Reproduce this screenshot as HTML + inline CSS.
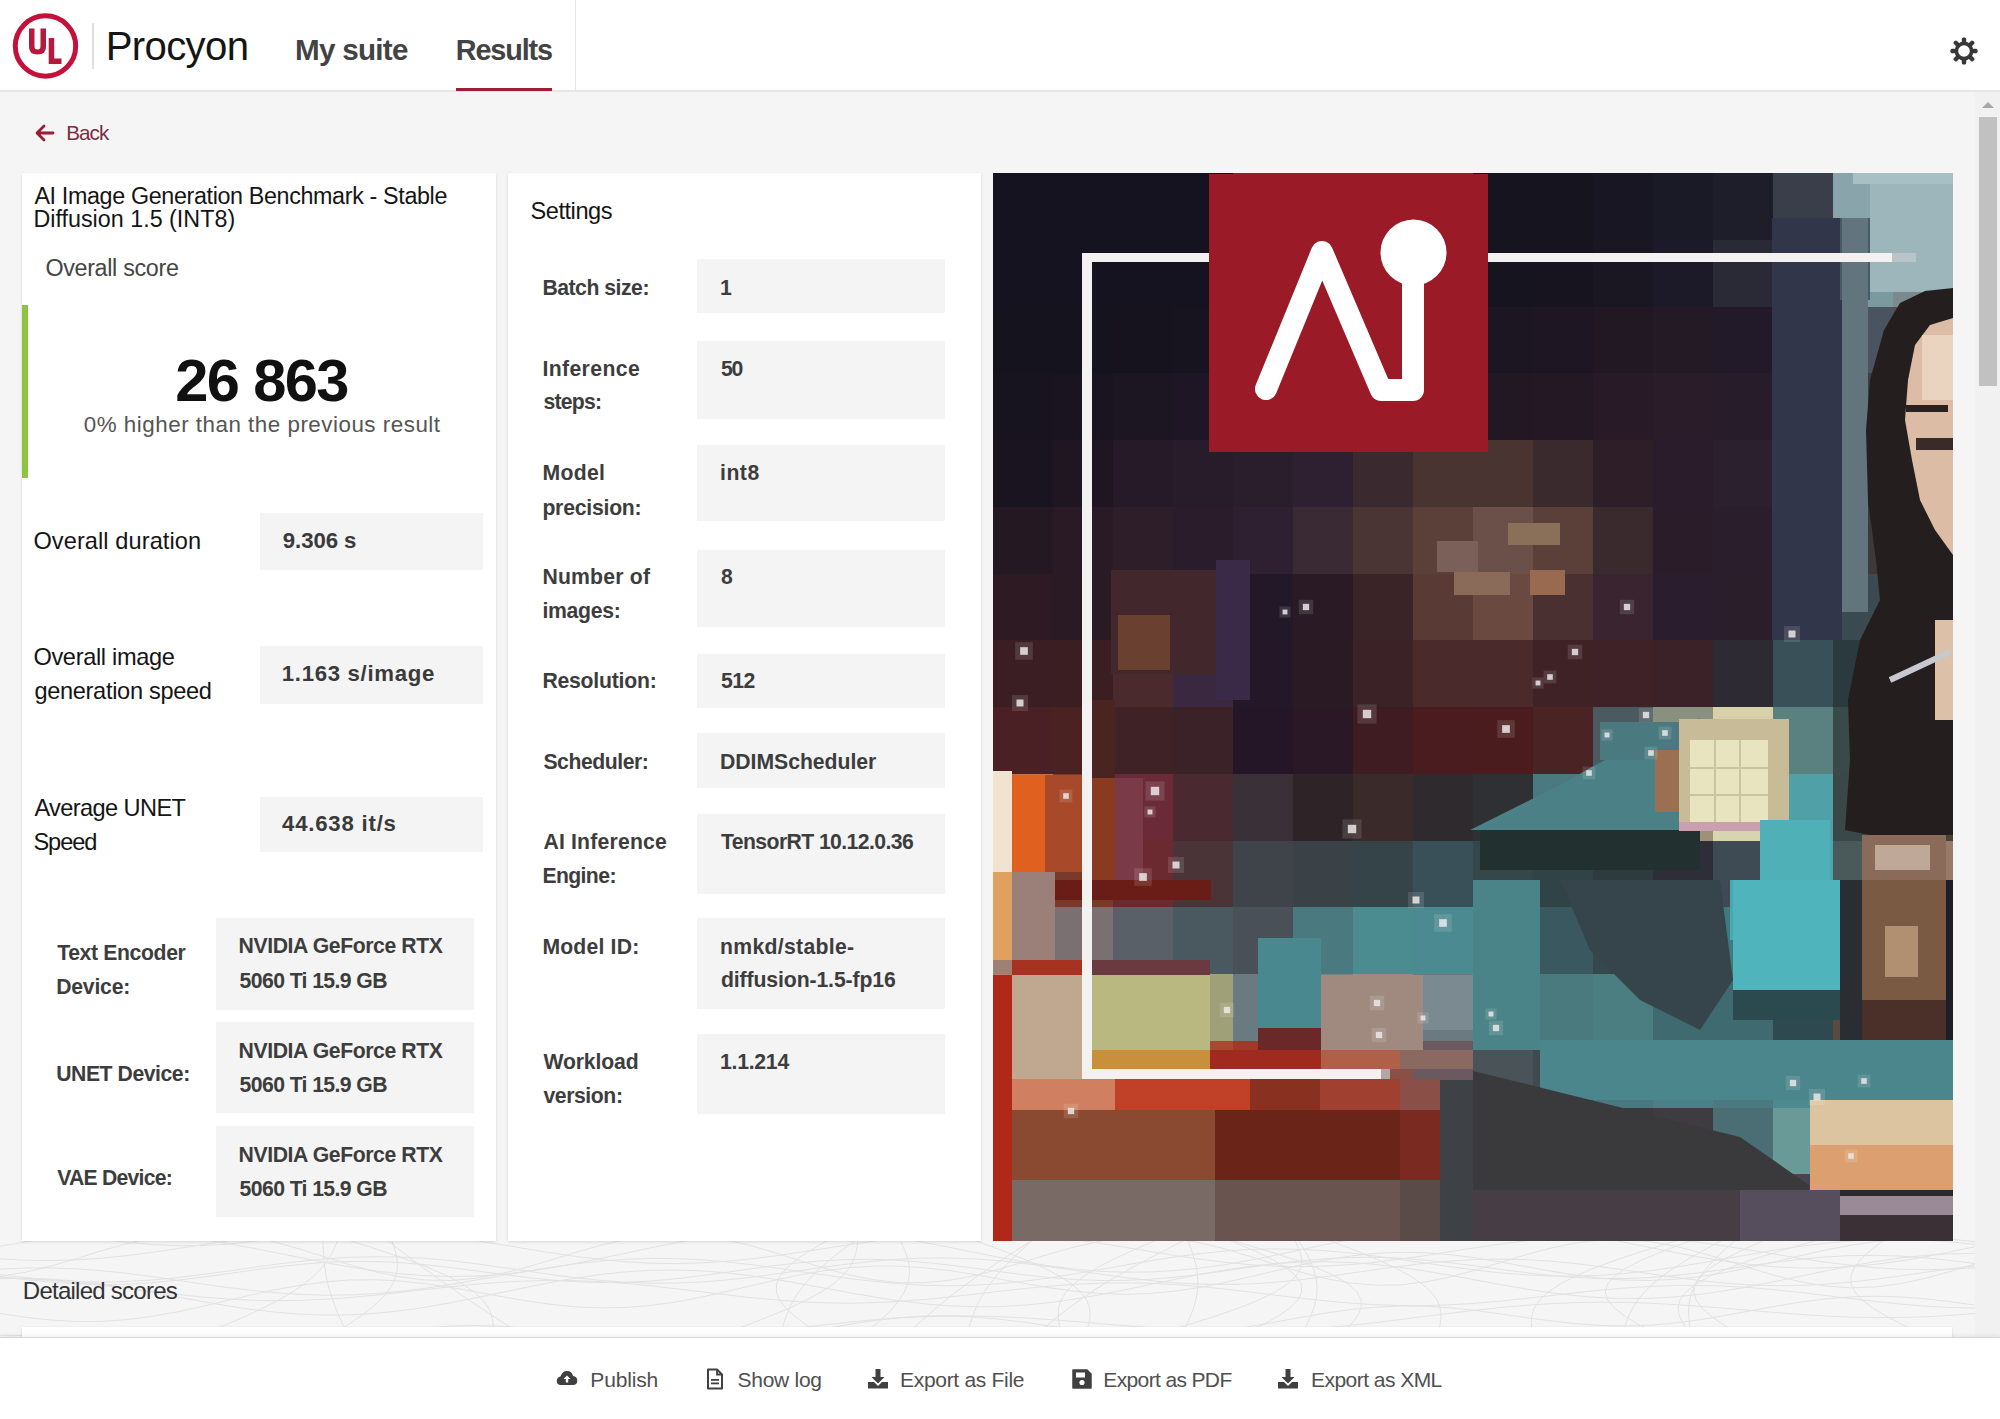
<!DOCTYPE html>
<html><head><meta charset="utf-8">
<style>
html,body{margin:0;padding:0}
body{width:2000px;height:1419px;overflow:hidden;position:relative;background:#f5f5f5;font-family:"Liberation Sans",sans-serif}
.t{position:absolute;white-space:nowrap;line-height:1}
.box{position:absolute;background:#f4f4f4}
.card{position:absolute;background:#fff;box-shadow:0 1px 3px rgba(0,0,0,0.13)}
</style></head><body>
<svg width="2000" height="100" viewBox="0 1237 2000 100" style="position:absolute;left:0;top:1237px" fill="none" stroke="#e2e2e2" stroke-width="1"><polyline points="0,1274.6 25,1277.6 50,1280.0 75,1281.5 100,1282.1 125,1281.6 150,1280.2 175,1277.9 200,1274.9 225,1271.5 250,1267.9 275,1264.4 300,1261.4 325,1258.9 350,1257.3 375,1256.7 400,1257.0 425,1258.4 450,1260.6 475,1263.6 500,1267.1 525,1270.7 550,1274.4 575,1277.6 600,1280.3 625,1282.2 650,1283.2 675,1283.1 700,1282.1 725,1280.1 750,1277.4 775,1274.1 800,1270.6 825,1267.0 850,1263.8 875,1261.0 900,1259.1 925,1258.0 950,1258.0 975,1258.9 1000,1260.8 1025,1263.5 1050,1266.8 1075,1270.4 1100,1274.1 1125,1277.5 1150,1280.5 1175,1282.8 1200,1284.1 1225,1284.5 1250,1283.9 1275,1282.3 1300,1279.8 1325,1276.7 1350,1273.3 1375,1269.7 1400,1266.3 1425,1263.3 1450,1261.0 1475,1259.5 1500,1259.1 1525,1259.6 1550,1261.1 1575,1263.5 1600,1266.6 1625,1270.1 1650,1273.8 1675,1277.4 1700,1280.6 1725,1283.1 1750,1284.9 1775,1285.7 1800,1285.4 1825,1284.2 1850,1282.1 1875,1279.3 1900,1276.0 1925,1272.4 1950,1268.9 1975,1265.7 2000,1263.1"/><polyline points="0,1276.5 25,1279.6 50,1282.1 75,1283.9 100,1284.6 125,1284.3 150,1282.9 175,1280.5 200,1277.5 225,1274.1 250,1270.5 275,1267.2 300,1264.4 325,1262.4 350,1261.4 375,1261.5 400,1262.6 425,1264.7 450,1267.5 475,1270.7 500,1274.1 525,1277.2 550,1279.9 575,1281.7 600,1282.6 625,1282.4 650,1281.1 675,1278.9 700,1275.9 725,1272.5 750,1268.9 775,1265.5 800,1262.7 825,1260.6 850,1259.5 875,1259.4 900,1260.4 925,1262.4 950,1265.1 975,1268.3 1000,1271.7 1025,1274.9 1050,1277.6 1075,1279.5 1100,1280.5 1125,1280.4 1150,1279.3 1175,1277.2 1200,1274.3 1225,1270.9 1250,1267.3 1275,1263.9 1300,1261.0 1325,1258.8 1350,1257.5 1375,1257.3 1400,1258.2 1425,1260.1 1450,1262.7 1475,1265.9 1500,1269.3 1525,1272.5 1550,1275.3 1575,1277.3 1600,1278.5 1625,1278.5 1650,1277.5 1675,1275.5 1700,1272.7 1725,1269.3 1750,1265.7 1775,1262.3 1800,1259.3 1825,1257.0 1850,1255.6 1875,1255.3 1900,1256.1 1925,1257.8 1950,1260.4 1975,1263.5 2000,1266.9"/><polyline points="0,1227.9 25,1229.7 50,1232.4 75,1235.7 100,1239.0 125,1242.0 150,1244.4 175,1245.6 200,1245.7 225,1244.4 250,1241.9 275,1238.4 300,1234.2 325,1229.7 350,1225.4 375,1221.6 400,1218.7 425,1217.1 450,1216.7 475,1217.6 500,1219.6 525,1222.5 550,1225.8 575,1229.1 600,1232.0 625,1234.1 650,1235.2 675,1234.9 700,1233.4 725,1230.7 750,1227.0 775,1222.7 800,1218.2 825,1213.9 850,1210.3 875,1207.7 900,1206.3 925,1206.2 950,1207.3 975,1209.5 1000,1212.5 1025,1215.8 1050,1219.1 1075,1221.9 1100,1223.8 1125,1224.6 1150,1224.1 1175,1222.3 1200,1219.4 1225,1215.5 1250,1211.1 1275,1206.6 1300,1202.5 1325,1199.1 1350,1196.7 1375,1195.5 1400,1195.7 1425,1197.1 1450,1199.5 1475,1202.6 1500,1205.9 1525,1209.1 1550,1211.8 1575,1213.5 1600,1214.0 1625,1213.2 1650,1211.2 1675,1208.0 1700,1204.0 1725,1199.6 1750,1195.1 1775,1191.1 1800,1187.9 1825,1185.7 1850,1184.9 1875,1185.3 1900,1186.9 1925,1189.5 1950,1192.7 1975,1196.0 2000,1199.1"/><polyline points="0,1246.3 25,1241.9 50,1238.2 75,1235.5 100,1233.9 125,1233.5 150,1234.3 175,1236.3 200,1239.2 225,1243.1 250,1247.6 275,1252.5 300,1257.6 325,1262.5 350,1267.0 375,1270.8 400,1273.8 425,1275.7 450,1276.5 475,1276.1 500,1274.5 525,1271.8 550,1268.1 575,1263.6 600,1258.6 625,1253.3 650,1248.0 675,1242.9 700,1238.3 725,1234.5 750,1231.7 775,1229.9 800,1229.3 825,1229.9 850,1231.7 875,1234.5 900,1238.2 925,1242.6 950,1247.5 975,1252.5 1000,1257.5 1025,1262.1 1050,1266.0 1075,1269.1 1100,1271.3 1125,1272.2 1150,1272.0 1175,1270.6 1200,1268.1 1225,1264.6 1250,1260.2 1275,1255.3 1300,1250.0 1325,1244.6 1350,1239.5 1375,1234.8 1400,1230.9 1425,1227.9 1450,1225.9 1475,1225.1 1500,1225.5 1525,1227.1 1550,1229.7 1575,1233.3 1600,1237.6 1625,1242.4 1650,1247.5 1675,1252.5 1700,1257.1 1725,1261.2 1750,1264.5 1775,1266.8 1800,1268.0 1825,1267.9 1850,1266.7 1875,1264.4 1900,1261.0 1925,1256.8 1950,1251.9 1975,1246.7 2000,1241.3"/><polyline points="0,1357.7 25,1356.3 50,1354.2 75,1351.6 100,1348.7 125,1345.6 150,1342.4 175,1339.3 200,1336.4 225,1334.0 250,1332.0 275,1330.6 300,1329.8 325,1329.7 350,1330.2 375,1331.3 400,1332.8 425,1334.7 450,1336.8 475,1338.9 500,1340.9 525,1342.7 550,1344.0 575,1344.9 600,1345.1 625,1344.7 650,1343.7 675,1342.0 700,1339.8 725,1337.2 750,1334.2 775,1331.0 800,1327.8 825,1324.8 850,1322.0 875,1319.7 900,1317.8 925,1316.6 950,1316.0 975,1316.1 1000,1316.7 1025,1317.9 1050,1319.6 1075,1321.5 1100,1323.6 1125,1325.7 1150,1327.7 1175,1329.3 1200,1330.6 1225,1331.3 1250,1331.3 1275,1330.8 1300,1329.6 1325,1327.8 1350,1325.4 1375,1322.7 1400,1319.6 1425,1316.4 1450,1313.3 1475,1310.3 1500,1307.6 1525,1305.4 1550,1303.7 1575,1302.6 1600,1302.2 1625,1302.4 1650,1303.2 1675,1304.6 1700,1306.3 1725,1308.3 1750,1310.4 1775,1312.5 1800,1314.4 1825,1316.0 1850,1317.1 1875,1317.6 1900,1317.5 1925,1316.8 1950,1315.4 1975,1313.5 2000,1311.0"/><polyline points="0,1258.8 25,1260.2 50,1260.5 75,1259.9 100,1258.3 125,1255.8 150,1252.7 175,1249.0 200,1245.1 225,1241.2 250,1237.6 275,1234.4 300,1232.0 325,1230.4 350,1229.7 375,1230.1 400,1231.4 425,1233.7 450,1236.7 475,1240.4 500,1244.4 525,1248.6 550,1252.6 575,1256.3 600,1259.4 625,1261.8 650,1263.2 675,1263.6 700,1263.0 725,1261.4 750,1259.0 775,1255.9 800,1252.3 825,1248.4 850,1244.5 875,1240.9 900,1237.7 925,1235.2 950,1233.5 975,1232.8 1000,1233.1 1025,1234.4 1050,1236.6 1075,1239.6 1100,1243.2 1125,1247.3 1150,1251.4 1175,1255.5 1200,1259.2 1225,1262.3 1250,1264.7 1275,1266.2 1300,1266.7 1325,1266.1 1350,1264.6 1375,1262.3 1400,1259.2 1425,1255.6 1450,1251.7 1475,1247.8 1500,1244.1 1525,1240.9 1550,1238.4 1575,1236.6 1600,1235.9 1625,1236.1 1650,1237.4 1675,1239.5 1700,1242.5 1725,1246.1 1750,1250.1 1775,1254.2 1800,1258.3 1825,1262.1 1850,1265.2 1875,1267.7 1900,1269.2 1925,1269.7 1950,1269.3 1975,1267.8 2000,1265.5"/><polyline points="0,1313.4 25,1317.2 50,1320.0 75,1321.5 100,1321.5 125,1319.8 150,1316.7 175,1312.3 200,1307.0 225,1301.1 250,1295.3 275,1289.8 300,1285.3 325,1281.9 350,1280.0 375,1279.7 400,1281.0 425,1283.6 450,1287.3 475,1291.7 500,1296.3 525,1300.6 550,1304.3 575,1306.8 600,1307.9 625,1307.5 650,1305.5 675,1302.1 700,1297.4 725,1291.9 750,1286.0 775,1280.2 800,1274.9 825,1270.6 850,1267.6 875,1266.1 900,1266.2 925,1267.8 950,1270.7 975,1274.6 1000,1279.1 1025,1283.6 1050,1287.8 1075,1291.2 1100,1293.5 1125,1294.3 1150,1293.5 1175,1291.1 1200,1287.3 1225,1282.5 1250,1276.8 1275,1270.9 1300,1265.2 1325,1260.1 1350,1256.1 1375,1253.4 1400,1252.3 1425,1252.7 1450,1254.6 1475,1257.8 1500,1261.9 1525,1266.4 1550,1271.0 1575,1275.0 1600,1278.2 1625,1280.1 1650,1280.5 1675,1279.3 1700,1276.6 1725,1272.6 1750,1267.5 1775,1261.7 1800,1255.8 1825,1250.2 1850,1245.3 1875,1241.6 1900,1239.3 1925,1238.5 1950,1239.3 1975,1241.6 2000,1245.0"/><polyline points="0,1276.4 25,1272.3 50,1266.3 75,1259.1 100,1251.3 125,1244.1 150,1238.0 175,1233.9 200,1232.2 225,1233.1 250,1236.4 275,1242.0 300,1249.1 325,1257.0 350,1264.8 375,1271.7 400,1276.9 425,1280.0 450,1280.5 475,1278.4 500,1273.9 525,1267.7 550,1260.3 575,1252.6 600,1245.4 625,1239.7 650,1235.9 675,1234.6 700,1235.9 725,1239.6 750,1245.4 775,1252.7 800,1260.6 825,1268.4 850,1275.1 875,1280.0 900,1282.6 925,1282.7 950,1280.2 975,1275.5 1000,1269.0 1025,1261.5 1050,1253.8 1075,1246.8 1100,1241.3 1125,1237.9 1150,1237.0 1175,1238.7 1200,1242.8 1225,1248.9 1250,1256.4 1275,1264.3 1300,1271.9 1325,1278.4 1350,1283.0 1375,1285.2 1400,1284.9 1425,1282.0 1450,1277.0 1475,1270.2 1500,1262.7 1525,1255.0 1550,1248.3 1575,1243.1 1600,1240.0 1625,1239.5 1650,1241.6 1675,1246.1 1700,1252.5 1725,1260.0 1750,1268.0 1775,1275.5 1800,1281.7 1825,1285.9 1850,1287.8 1875,1287.0 1900,1283.8 1925,1278.4 1950,1271.5 1975,1263.9 2000,1256.3"/><polyline points="0,1269.2 25,1268.0 50,1267.9 75,1268.8 100,1270.6 125,1273.1 150,1276.3 175,1279.9 200,1283.6 225,1287.1 250,1290.2 275,1292.7 300,1294.4 325,1295.2 350,1294.9 375,1293.7 400,1291.4 425,1288.3 450,1284.5 475,1280.3 500,1275.9 525,1271.5 550,1267.5 575,1263.9 600,1261.2 625,1259.3 650,1258.4 675,1258.6 700,1259.7 725,1261.7 750,1264.5 775,1267.8 800,1271.5 825,1275.1 850,1278.6 875,1281.5 900,1283.8 925,1285.3 950,1285.7 975,1285.2 1000,1283.6 1025,1281.1 1050,1277.8 1075,1273.9 1100,1269.6 1125,1265.1 1150,1260.8 1175,1256.9 1200,1253.6 1225,1251.0 1250,1249.4 1275,1248.9 1300,1249.3 1325,1250.7 1350,1253.0 1375,1256.0 1400,1259.4 1425,1263.0 1450,1266.7 1475,1270.0 1500,1272.8 1525,1274.8 1550,1276.0 1575,1276.2 1600,1275.3 1625,1273.5 1650,1270.7 1675,1267.2 1700,1263.2 1725,1258.8 1750,1254.4 1775,1250.1 1800,1246.4 1825,1243.3 1850,1241.0 1875,1239.7 1900,1239.4 1925,1240.1 1950,1241.8 1975,1244.3 2000,1247.4"/><polyline points="0,1278.6 25,1278.2 50,1279.0 75,1281.0 100,1283.9 125,1287.6 150,1291.9 175,1296.5 200,1301.1 225,1305.4 250,1309.2 275,1312.2 300,1314.2 325,1315.1 350,1314.9 375,1313.4 400,1310.8 425,1307.3 450,1302.9 475,1298.0 500,1292.8 525,1287.6 550,1282.6 575,1278.2 600,1274.6 625,1271.9 650,1270.3 675,1270.0 700,1270.8 725,1272.7 750,1275.6 775,1279.3 800,1283.6 825,1288.2 850,1292.8 875,1297.1 900,1300.9 925,1303.9 950,1305.9 975,1306.8 1000,1306.6 1025,1305.1 1050,1302.6 1075,1299.0 1100,1294.7 1125,1289.8 1150,1284.5 1175,1279.3 1200,1274.4 1225,1269.9 1250,1266.3 1275,1263.6 1300,1262.1 1325,1261.7 1350,1262.5 1375,1264.4 1400,1267.3 1425,1271.0 1450,1275.3 1475,1279.9 1500,1284.5 1525,1288.8 1550,1292.6 1575,1295.6 1600,1297.7 1625,1298.6 1650,1298.3 1675,1296.9 1700,1294.3 1725,1290.8 1750,1286.4 1775,1281.5 1800,1276.3 1825,1271.1 1850,1266.1 1875,1261.7 1900,1258.0 1925,1255.4 1950,1253.8 1975,1253.4 2000,1254.2"/><polyline points="0,1335.3 25,1335.6 50,1337.2 75,1339.9 100,1343.3 125,1346.9 150,1350.3 175,1353.0 200,1354.8 225,1355.3 250,1354.3 275,1352.1 300,1348.7 325,1344.5 350,1339.9 375,1335.3 400,1331.2 425,1328.1 450,1326.1 475,1325.5 500,1326.2 525,1328.2 550,1331.1 575,1334.6 600,1338.2 625,1341.5 650,1343.9 675,1345.3 700,1345.4 725,1344.0 750,1341.4 775,1337.7 800,1333.3 825,1328.7 850,1324.2 875,1320.4 900,1317.6 925,1316.0 950,1315.8 975,1317.0 1000,1319.3 1025,1322.4 1050,1326.0 1075,1329.5 1100,1332.6 1125,1334.7 1150,1335.7 1175,1335.3 1200,1333.6 1225,1330.6 1250,1326.6 1275,1322.1 1300,1317.5 1325,1313.2 1350,1309.6 1375,1307.2 1400,1306.0 1425,1306.3 1450,1307.8 1475,1310.4 1500,1313.8 1525,1317.4 1550,1320.8 1575,1323.6 1600,1325.4 1625,1326.0 1650,1325.2 1675,1323.0 1700,1319.7 1725,1315.5 1750,1310.9 1775,1306.3 1800,1302.2 1825,1299.0 1850,1296.9 1875,1296.2 1900,1296.9 1925,1298.8 1950,1301.6 1975,1305.1 2000,1308.7"/><polyline points="0,1277.9 25,1278.7 50,1280.3 75,1282.5 100,1285.2 125,1288.2 150,1291.3 175,1294.2 200,1296.8 225,1298.8 250,1300.1 275,1300.7 300,1300.4 325,1299.3 350,1297.5 375,1295.2 400,1292.5 425,1289.6 450,1286.8 475,1284.3 500,1282.3 525,1281.0 550,1280.4 575,1280.6 600,1281.6 625,1283.4 650,1285.7 675,1288.6 700,1291.6 725,1294.7 750,1297.5 775,1299.9 800,1301.8 825,1302.9 850,1303.2 875,1302.6 900,1301.3 925,1299.4 950,1296.9 975,1294.1 1000,1291.2 1025,1288.5 1050,1286.1 1075,1284.3 1100,1283.2 1125,1282.8 1150,1283.3 1175,1284.6 1200,1286.5 1225,1289.1 1250,1292.0 1275,1295.1 1300,1298.1 1325,1300.8 1350,1303.1 1375,1304.7 1400,1305.5 1425,1305.6 1450,1304.8 1475,1303.3 1500,1301.1 1525,1298.5 1550,1295.7 1575,1292.9 1600,1290.2 1625,1288.0 1650,1286.4 1675,1285.5 1700,1285.4 1725,1286.1 1750,1287.6 1775,1289.7 1800,1292.4 1825,1295.4 1850,1298.5 1875,1301.4 1900,1304.0 1925,1306.1 1950,1307.5 1975,1308.1 2000,1307.9"/><polyline points="390.1,1236 393.1,1244 395.6,1252 397.2,1260 397.4,1268 396.0,1276 392.7,1284 387.4,1292 380.3,1300 371.3,1308 360.8,1316 349.2,1324 336.9,1332 324.3,1340"/><polyline points="322.6,1236 323.0,1244 323.4,1252 324.0,1260 324.9,1268 326.2,1276 327.9,1284 330.1,1292 332.7,1300 335.7,1308 339.0,1316 342.6,1324 346.3,1332 350.1,1340"/><polyline points="381.6,1236 391.9,1244 402.4,1252 412.9,1260 423.6,1268 434.6,1276 445.8,1284 457.2,1292 468.9,1300 480.9,1308 493.0,1316 505.3,1324 517.7,1332 530.1,1340"/><polyline points="339.4,1236 336.2,1244 332.4,1252 327.7,1260 321.6,1268 313.8,1276 304.1,1284 292.3,1292 278.6,1300 263.0,1308 245.9,1316 227.6,1324 208.5,1332 189.2,1340"/><polyline points="335.3,1236 360.7,1244 385.4,1252 408.4,1260 429.3,1268 447.4,1276 462.5,1284 474.3,1292 482.9,1300 488.6,1308 491.9,1316 493.2,1324 493.3,1332 493.0,1340"/><polyline points="898.3,1236 902.1,1244 905.4,1252 908.0,1260 909.4,1268 909.3,1276 907.7,1284 904.3,1292 899.3,1300 892.8,1308 885.0,1316 876.1,1324 866.6,1332 857.0,1340"/><polyline points="835.4,1236 821.2,1244 807.9,1252 796.1,1260 786.7,1268 780.0,1276 776.5,1284 776.4,1292 779.5,1300 785.6,1308 794.3,1316 805.0,1324 816.9,1332 829.2,1340"/><polyline points="858.1,1236 857.5,1244 856.2,1252 853.6,1260 849.2,1268 842.5,1276 833.2,1284 821.2,1292 806.6,1300 789.6,1308 770.5,1316 749.8,1324 728.1,1332 706.0,1340"/><polyline points="861.0,1236 850.2,1244 839.7,1252 829.7,1260 820.5,1268 812.1,1276 804.9,1284 798.7,1292 793.6,1300 789.4,1308 786.2,1316 783.5,1324 781.3,1332 779.2,1340"/><polyline points="1039.1,1236 1026.4,1244 1013.8,1252 1001.4,1260 989.3,1268 977.7,1276 966.6,1284 956.0,1292 945.9,1300 936.2,1308 927.0,1316 918.0,1324 909.3,1332 900.6,1340"/><polyline points="961.9,1236 984.4,1244 1006.1,1252 1026.3,1260 1044.2,1268 1059.5,1276 1071.7,1284 1080.8,1292 1086.6,1300 1089.6,1308 1090.1,1316 1088.7,1324 1086.1,1332 1083.1,1340"/><polyline points="1037.4,1236 1028.3,1244 1019.5,1252 1011.1,1260 1003.2,1268 996.1,1276 989.8,1284 984.3,1292 979.7,1300 975.9,1308 972.7,1316 970.0,1324 967.6,1332 965.3,1340"/><polyline points="1216.1,1236 1244.1,1244 1271.0,1252 1295.7,1260 1317.3,1268 1334.9,1276 1348.2,1284 1356.9,1292 1361.1,1300 1361.1,1308 1357.6,1316 1351.3,1324 1343.4,1332 1334.9,1340"/><polyline points="1166.2,1236 1147.3,1244 1129.0,1252 1112.0,1260 1096.9,1268 1084.0,1276 1073.7,1284 1066.1,1292 1061.1,1300 1058.5,1308 1058.1,1316 1059.2,1324 1061.3,1332 1063.8,1340"/><polyline points="1186.0,1236 1189.2,1244 1192.1,1252 1194.6,1260 1196.5,1268 1197.6,1276 1197.9,1284 1197.3,1292 1195.8,1300 1193.5,1308 1190.5,1316 1187.0,1324 1183.2,1332 1179.2,1340"/><polyline points="1193.1,1236 1177.1,1244 1161.4,1252 1146.1,1260 1131.3,1268 1117.3,1276 1103.9,1284 1091.5,1292 1079.8,1300 1068.8,1308 1058.5,1316 1048.6,1324 1039.1,1332 1029.6,1340"/><polyline points="1218.6,1236 1238.3,1244 1256.9,1252 1273.3,1260 1286.6,1268 1296.0,1276 1301.2,1284 1301.7,1292 1297.8,1300 1289.8,1308 1278.3,1316 1264.1,1324 1248.2,1332 1231.7,1340"/><polyline points="1295.7,1236 1300.8,1244 1305.6,1252 1309.8,1260 1313.2,1268 1315.6,1276 1316.9,1284 1317.0,1292 1315.9,1300 1313.8,1308 1310.8,1316 1307.0,1324 1302.9,1332 1298.5,1340"/><polyline points="1292.3,1236 1296.8,1244 1300.2,1252 1301.8,1260 1300.6,1268 1296.0,1276 1287.6,1284 1275.2,1292 1258.8,1300 1238.8,1308 1215.8,1316 1190.3,1324 1163.4,1332 1135.9,1340"/><polyline points="1317.2,1236 1338.6,1244 1359.3,1252 1378.6,1260 1395.8,1268 1410.4,1276 1422.3,1284 1431.1,1292 1437.0,1300 1440.2,1308 1441.1,1316 1440.3,1324 1438.3,1332 1435.9,1340"/><polyline points="1774.2,1236 1755.8,1244 1738.5,1252 1723.0,1260 1710.3,1268 1700.9,1276 1695.3,1284 1693.7,1292 1696.1,1300 1702.0,1308 1711.0,1316 1722.3,1324 1735.1,1332 1748.4,1340"/><polyline points="1832.2,1236 1803.8,1244 1776.5,1252 1751.2,1260 1729.0,1268 1710.4,1276 1695.9,1284 1685.8,1292 1679.9,1300 1678.0,1308 1679.4,1316 1683.4,1324 1689.0,1332 1695.1,1340"/><polyline points="1730.1,1236 1715.1,1244 1700.5,1252 1686.7,1260 1673.9,1268 1662.5,1276 1652.7,1284 1644.4,1292 1637.8,1300 1632.6,1308 1628.6,1316 1625.6,1324 1623.1,1332 1620.9,1340"/><polyline points="1692.6,1236 1666.0,1244 1640.2,1252 1616.1,1260 1594.3,1268 1575.6,1276 1560.2,1284 1548.2,1292 1539.8,1300 1534.4,1308 1531.8,1316 1531.3,1324 1532.0,1332 1533.2,1340"/><polyline points="1704.4,1236 1682.0,1244 1660.8,1252 1641.9,1260 1626.3,1268 1614.7,1276 1607.6,1284 1605.3,1292 1607.7,1300 1614.4,1308 1624.7,1316 1637.9,1324 1652.8,1332 1668.4,1340"/><polyline points="1889.8,1236 1878.8,1244 1868.6,1252 1860.1,1260 1854.1,1268 1851.0,1276 1851.2,1284 1855.0,1292 1862.3,1300 1872.8,1308 1885.9,1316 1901.2,1324 1917.7,1332 1934.8,1340"/><polyline points="1740.5,1236 1731.2,1244 1722.3,1252 1713.9,1260 1706.6,1268 1700.3,1276 1695.4,1284 1691.8,1292 1689.6,1300 1688.6,1308 1688.7,1316 1689.5,1324 1690.9,1332 1692.4,1340"/></svg>
<div style="position:absolute;left:0;top:0;width:2000px;height:90px;background:#fff;border-bottom:2px solid #e6e6e6"></div>
<svg width="80" height="80" style="position:absolute;left:5px;top:6px" viewBox="5 6 80 80">
<circle cx="45.5" cy="46" r="30.2" fill="none" stroke="#c5113a" stroke-width="5"/>
<path d="M29 28.5 h5.5 v18 q0 3 3 3 q3 0 3 -3 v-18 h5.5 v18.5 q0 7.5 -8.5 7.5 q-8.5 0 -8.5 -7.5 z" fill="#b31a3e"/>
<path d="M48.7 38 h5.5 v20.5 h7.3 v5.5 h-12.8 z" fill="#b31a3e"/>
</svg>
<div style="position:absolute;left:92px;top:23px;width:2px;height:46px;background:#dedede"></div>
<div style="position:absolute;left:575px;top:0;width:1px;height:91px;background:#e6e6e6"></div>
<div style="position:absolute;left:456px;top:88px;width:96px;height:3px;background:#a31c36"></div>
<svg width="30" height="30" viewBox="0 0 30 30" style="position:absolute;left:1949px;top:36px">
<g fill="#383838">
<circle cx="15" cy="15" r="9.4"/>
<g id="tooth"><rect x="12.8" y="1.4" width="4.4" height="6" rx="1.6"/><rect x="12.8" y="22.6" width="4.4" height="6" rx="1.6"/></g>
<g transform="rotate(45 15 15)"><rect x="12.8" y="1.4" width="4.4" height="6" rx="1.6"/><rect x="12.8" y="22.6" width="4.4" height="6" rx="1.6"/></g>
<g transform="rotate(90 15 15)"><rect x="12.8" y="1.4" width="4.4" height="6" rx="1.6"/><rect x="12.8" y="22.6" width="4.4" height="6" rx="1.6"/></g>
<g transform="rotate(135 15 15)"><rect x="12.8" y="1.4" width="4.4" height="6" rx="1.6"/><rect x="12.8" y="22.6" width="4.4" height="6" rx="1.6"/></g>
</g>
<circle cx="15" cy="15" r="5.8" fill="#fff"/>
</svg>
<!-- scrollbar -->
<div style="position:absolute;left:1975px;top:92px;width:25px;height:1245px;background:#f1f1f1"></div>
<div style="position:absolute;left:1979px;top:117px;width:18px;height:269px;background:#c1c1c1"></div>
<svg width="14" height="8" style="position:absolute;left:1981px;top:101px"><path d="M1 7 L7 1 L13 7 Z" fill="#a8a8a8"/></svg>
<!-- back -->
<svg width="22" height="20" viewBox="0 0 22 20" style="position:absolute;left:34px;top:123px">
<path d="M19 10 H4 M10 3 L3 10 L10 17" fill="none" stroke="#9b1c33" stroke-width="2.8" stroke-linecap="round" stroke-linejoin="round"/>
</svg>
<div class="card" style="left:22px;top:173px;width:474px;height:1068px"></div>
<div class="card" style="left:508px;top:173px;width:473px;height:1068px"></div>
<div style="position:absolute;left:22px;top:305px;width:6px;height:173px;background:#8cc43f"></div>
<div class="box" style="left:260px;top:513px;width:223px;height:57px"></div>
<div class="box" style="left:260px;top:646px;width:223px;height:58px"></div>
<div class="box" style="left:260px;top:797px;width:223px;height:55px"></div>
<div class="box" style="left:216px;top:918px;width:258px;height:92px"></div>
<div class="box" style="left:216px;top:1022px;width:258px;height:91px"></div>
<div class="box" style="left:216px;top:1126px;width:258px;height:91px"></div>
<div class="box" style="left:697px;top:259px;width:248px;height:54px"></div>
<div class="box" style="left:697px;top:341px;width:248px;height:78px"></div>
<div class="box" style="left:697px;top:445px;width:248px;height:76px"></div>
<div class="box" style="left:697px;top:550px;width:248px;height:77px"></div>
<div class="box" style="left:697px;top:654px;width:248px;height:54px"></div>
<div class="box" style="left:697px;top:733px;width:248px;height:55px"></div>
<div class="box" style="left:697px;top:814px;width:248px;height:80px"></div>
<div class="box" style="left:697px;top:918px;width:248px;height:91px"></div>
<div class="box" style="left:697px;top:1034px;width:248px;height:80px"></div>
<svg width="960" height="1068" viewBox="993 173 960 1068" style="position:absolute;left:993px;top:173px;display:block">
<g shape-rendering="crispEdges">
<rect x="993" y="173.00" width="60.5" height="67.25" fill="#15131f"/>
<rect x="1053" y="173.00" width="60.5" height="67.25" fill="#15131f"/>
<rect x="1113" y="173.00" width="60.5" height="67.25" fill="#15131f"/>
<rect x="1173" y="173.00" width="60.5" height="67.25" fill="#15131f"/>
<rect x="1233" y="173.00" width="60.5" height="67.25" fill="#9b1a28"/>
<rect x="1293" y="173.00" width="60.5" height="67.25" fill="#9b1a28"/>
<rect x="1353" y="173.00" width="60.5" height="67.25" fill="#9b1a28"/>
<rect x="1413" y="173.00" width="60.5" height="67.25" fill="#9b1a28"/>
<rect x="1473" y="173.00" width="60.5" height="67.25" fill="#16141f"/>
<rect x="1533" y="173.00" width="60.5" height="67.25" fill="#16141f"/>
<rect x="1593" y="173.00" width="60.5" height="67.25" fill="#181622"/>
<rect x="1653" y="173.00" width="60.5" height="67.25" fill="#1a1a26"/>
<rect x="1713" y="173.00" width="60.5" height="67.25" fill="#1e1e2a"/>
<rect x="1773" y="173.00" width="60.5" height="67.25" fill="#3a3e4a"/>
<rect x="1833" y="173.00" width="60.5" height="67.25" fill="#8aa2aa"/>
<rect x="1893" y="173.00" width="60.5" height="67.25" fill="#a0b8bc"/>
<rect x="993" y="239.75" width="60.5" height="67.25" fill="#15131f"/>
<rect x="1053" y="239.75" width="60.5" height="67.25" fill="#15131f"/>
<rect x="1113" y="239.75" width="60.5" height="67.25" fill="#15131f"/>
<rect x="1173" y="239.75" width="60.5" height="67.25" fill="#15131f"/>
<rect x="1233" y="239.75" width="60.5" height="67.25" fill="#9b1a28"/>
<rect x="1293" y="239.75" width="60.5" height="67.25" fill="#9b1a28"/>
<rect x="1353" y="239.75" width="60.5" height="67.25" fill="#9b1a28"/>
<rect x="1413" y="239.75" width="60.5" height="67.25" fill="#9b1a28"/>
<rect x="1473" y="239.75" width="60.5" height="67.25" fill="#16141f"/>
<rect x="1533" y="239.75" width="60.5" height="67.25" fill="#17141f"/>
<rect x="1593" y="239.75" width="60.5" height="67.25" fill="#1a1622"/>
<rect x="1653" y="239.75" width="60.5" height="67.25" fill="#1c1a28"/>
<rect x="1713" y="239.75" width="60.5" height="67.25" fill="#2a2a36"/>
<rect x="1773" y="239.75" width="60.5" height="67.25" fill="#3a4250"/>
<rect x="1833" y="239.75" width="60.5" height="67.25" fill="#7a9aa0"/>
<rect x="1893" y="239.75" width="60.5" height="67.25" fill="#7a8a8e"/>
<rect x="993" y="306.50" width="60.5" height="67.25" fill="#15131e"/>
<rect x="1053" y="306.50" width="60.5" height="67.25" fill="#15131e"/>
<rect x="1113" y="306.50" width="60.5" height="67.25" fill="#16131f"/>
<rect x="1173" y="306.50" width="60.5" height="67.25" fill="#17131f"/>
<rect x="1233" y="306.50" width="60.5" height="67.25" fill="#9b1a28"/>
<rect x="1293" y="306.50" width="60.5" height="67.25" fill="#9b1a28"/>
<rect x="1353" y="306.50" width="60.5" height="67.25" fill="#9b1a28"/>
<rect x="1413" y="306.50" width="60.5" height="67.25" fill="#9b1a28"/>
<rect x="1473" y="306.50" width="60.5" height="67.25" fill="#1c1622"/>
<rect x="1533" y="306.50" width="60.5" height="67.25" fill="#1e1622"/>
<rect x="1593" y="306.50" width="60.5" height="67.25" fill="#221824"/>
<rect x="1653" y="306.50" width="60.5" height="67.25" fill="#241a26"/>
<rect x="1713" y="306.50" width="60.5" height="67.25" fill="#221a28"/>
<rect x="1773" y="306.50" width="60.5" height="67.25" fill="#3a404e"/>
<rect x="1833" y="306.50" width="60.5" height="67.25" fill="#4a5460"/>
<rect x="1893" y="306.50" width="60.5" height="67.25" fill="#5a4a48"/>
<rect x="993" y="373.25" width="60.5" height="67.25" fill="#17131f"/>
<rect x="1053" y="373.25" width="60.5" height="67.25" fill="#1a1420"/>
<rect x="1113" y="373.25" width="60.5" height="67.25" fill="#1c1522"/>
<rect x="1173" y="373.25" width="60.5" height="67.25" fill="#1e1624"/>
<rect x="1233" y="373.25" width="60.5" height="67.25" fill="#9b1a28"/>
<rect x="1293" y="373.25" width="60.5" height="67.25" fill="#9b1a28"/>
<rect x="1353" y="373.25" width="60.5" height="67.25" fill="#9b1a28"/>
<rect x="1413" y="373.25" width="60.5" height="67.25" fill="#9b1a28"/>
<rect x="1473" y="373.25" width="60.5" height="67.25" fill="#221824"/>
<rect x="1533" y="373.25" width="60.5" height="67.25" fill="#241824"/>
<rect x="1593" y="373.25" width="60.5" height="67.25" fill="#281a26"/>
<rect x="1653" y="373.25" width="60.5" height="67.25" fill="#2a1c28"/>
<rect x="1713" y="373.25" width="60.5" height="67.25" fill="#261c2a"/>
<rect x="1773" y="373.25" width="60.5" height="67.25" fill="#3a404e"/>
<rect x="1833" y="373.25" width="60.5" height="67.25" fill="#3a3e48"/>
<rect x="1893" y="373.25" width="60.5" height="67.25" fill="#7a5a50"/>
<rect x="993" y="440.00" width="60.5" height="67.25" fill="#1a1420"/>
<rect x="1053" y="440.00" width="60.5" height="67.25" fill="#201622"/>
<rect x="1113" y="440.00" width="60.5" height="67.25" fill="#261a28"/>
<rect x="1173" y="440.00" width="60.5" height="67.25" fill="#281c2a"/>
<rect x="1233" y="440.00" width="60.5" height="67.25" fill="#2a1e2c"/>
<rect x="1293" y="440.00" width="60.5" height="67.25" fill="#2e2030"/>
<rect x="1353" y="440.00" width="60.5" height="67.25" fill="#3a2a30"/>
<rect x="1413" y="440.00" width="60.5" height="67.25" fill="#4a3432"/>
<rect x="1473" y="440.00" width="60.5" height="67.25" fill="#4a3432"/>
<rect x="1533" y="440.00" width="60.5" height="67.25" fill="#3a2a2e"/>
<rect x="1593" y="440.00" width="60.5" height="67.25" fill="#2e1e28"/>
<rect x="1653" y="440.00" width="60.5" height="67.25" fill="#2a1c2a"/>
<rect x="1713" y="440.00" width="60.5" height="67.25" fill="#2a202e"/>
<rect x="1773" y="440.00" width="60.5" height="67.25" fill="#3a3e4a"/>
<rect x="1833" y="440.00" width="60.5" height="67.25" fill="#2a2a30"/>
<rect x="1893" y="440.00" width="60.5" height="67.25" fill="#4a3a38"/>
<rect x="993" y="506.75" width="60.5" height="67.25" fill="#241822"/>
<rect x="1053" y="506.75" width="60.5" height="67.25" fill="#2a1a26"/>
<rect x="1113" y="506.75" width="60.5" height="67.25" fill="#2e1e2a"/>
<rect x="1173" y="506.75" width="60.5" height="67.25" fill="#2a1c2a"/>
<rect x="1233" y="506.75" width="60.5" height="67.25" fill="#2e2030"/>
<rect x="1293" y="506.75" width="60.5" height="67.25" fill="#3a2a34"/>
<rect x="1353" y="506.75" width="60.5" height="67.25" fill="#4a3434"/>
<rect x="1413" y="506.75" width="60.5" height="67.25" fill="#5a4038"/>
<rect x="1473" y="506.75" width="60.5" height="67.25" fill="#6a5048"/>
<rect x="1533" y="506.75" width="60.5" height="67.25" fill="#5a4038"/>
<rect x="1593" y="506.75" width="60.5" height="67.25" fill="#3a2a2e"/>
<rect x="1653" y="506.75" width="60.5" height="67.25" fill="#2a1c28"/>
<rect x="1713" y="506.75" width="60.5" height="67.25" fill="#2a1e2c"/>
<rect x="1773" y="506.75" width="60.5" height="67.25" fill="#3a404c"/>
<rect x="1833" y="506.75" width="60.5" height="67.25" fill="#3e3838"/>
<rect x="1893" y="506.75" width="60.5" height="67.25" fill="#3a3030"/>
<rect x="993" y="573.50" width="60.5" height="67.25" fill="#2e1a22"/>
<rect x="1053" y="573.50" width="60.5" height="67.25" fill="#2a1a24"/>
<rect x="1113" y="573.50" width="60.5" height="67.25" fill="#4a2a2c"/>
<rect x="1173" y="573.50" width="60.5" height="67.25" fill="#3e2838"/>
<rect x="1233" y="573.50" width="60.5" height="67.25" fill="#221828"/>
<rect x="1293" y="573.50" width="60.5" height="67.25" fill="#2a1a26"/>
<rect x="1353" y="573.50" width="60.5" height="67.25" fill="#3a2428"/>
<rect x="1413" y="573.50" width="60.5" height="67.25" fill="#5a3a34"/>
<rect x="1473" y="573.50" width="60.5" height="67.25" fill="#6a4a40"/>
<rect x="1533" y="573.50" width="60.5" height="67.25" fill="#4a3030"/>
<rect x="1593" y="573.50" width="60.5" height="67.25" fill="#3a2430"/>
<rect x="1653" y="573.50" width="60.5" height="67.25" fill="#2a1e2e"/>
<rect x="1713" y="573.50" width="60.5" height="67.25" fill="#2a1e2a"/>
<rect x="1773" y="573.50" width="60.5" height="67.25" fill="#3e4450"/>
<rect x="1833" y="573.50" width="60.5" height="67.25" fill="#3a4a50"/>
<rect x="1893" y="573.50" width="60.5" height="67.25" fill="#2a2828"/>
<rect x="993" y="640.25" width="60.5" height="67.25" fill="#3a1e24"/>
<rect x="1053" y="640.25" width="60.5" height="67.25" fill="#3a1e22"/>
<rect x="1113" y="640.25" width="60.5" height="67.25" fill="#4a2a2c"/>
<rect x="1173" y="640.25" width="60.5" height="67.25" fill="#3a2840"/>
<rect x="1233" y="640.25" width="60.5" height="67.25" fill="#241828"/>
<rect x="1293" y="640.25" width="60.5" height="67.25" fill="#2a1a24"/>
<rect x="1353" y="640.25" width="60.5" height="67.25" fill="#3a2226"/>
<rect x="1413" y="640.25" width="60.5" height="67.25" fill="#4a2a2a"/>
<rect x="1473" y="640.25" width="60.5" height="67.25" fill="#4a2a2a"/>
<rect x="1533" y="640.25" width="60.5" height="67.25" fill="#3e2226"/>
<rect x="1593" y="640.25" width="60.5" height="67.25" fill="#3e2228"/>
<rect x="1653" y="640.25" width="60.5" height="67.25" fill="#3a2228"/>
<rect x="1713" y="640.25" width="60.5" height="67.25" fill="#2e2a34"/>
<rect x="1773" y="640.25" width="60.5" height="67.25" fill="#3a5058"/>
<rect x="1833" y="640.25" width="60.5" height="67.25" fill="#2a3a3e"/>
<rect x="1893" y="640.25" width="60.5" height="67.25" fill="#3a3434"/>
<rect x="993" y="707.00" width="60.5" height="67.25" fill="#4a2024"/>
<rect x="1053" y="707.00" width="60.5" height="67.25" fill="#4a2222"/>
<rect x="1113" y="707.00" width="60.5" height="67.25" fill="#3e2226"/>
<rect x="1173" y="707.00" width="60.5" height="67.25" fill="#3a2228"/>
<rect x="1233" y="707.00" width="60.5" height="67.25" fill="#241626"/>
<rect x="1293" y="707.00" width="60.5" height="67.25" fill="#2a1826"/>
<rect x="1353" y="707.00" width="60.5" height="67.25" fill="#3e1c22"/>
<rect x="1413" y="707.00" width="60.5" height="67.25" fill="#4a1c20"/>
<rect x="1473" y="707.00" width="60.5" height="67.25" fill="#4a1c1e"/>
<rect x="1533" y="707.00" width="60.5" height="67.25" fill="#4a2424"/>
<rect x="1593" y="707.00" width="60.5" height="67.25" fill="#4a5a60"/>
<rect x="1653" y="707.00" width="60.5" height="67.25" fill="#8a9080"/>
<rect x="1713" y="707.00" width="60.5" height="67.25" fill="#d8d0a8"/>
<rect x="1773" y="707.00" width="60.5" height="67.25" fill="#5a8080"/>
<rect x="1833" y="707.00" width="60.5" height="67.25" fill="#3a4a48"/>
<rect x="1893" y="707.00" width="60.5" height="67.25" fill="#3a3430"/>
<rect x="993" y="773.75" width="60.5" height="67.25" fill="#c87040"/>
<rect x="1053" y="773.75" width="60.5" height="67.25" fill="#7a3a28"/>
<rect x="1113" y="773.75" width="60.5" height="67.25" fill="#6a2a38"/>
<rect x="1173" y="773.75" width="60.5" height="67.25" fill="#4a2a30"/>
<rect x="1233" y="773.75" width="60.5" height="67.25" fill="#3a3038"/>
<rect x="1293" y="773.75" width="60.5" height="67.25" fill="#2e2428"/>
<rect x="1353" y="773.75" width="60.5" height="67.25" fill="#3a2a2a"/>
<rect x="1413" y="773.75" width="60.5" height="67.25" fill="#2e2a2e"/>
<rect x="1473" y="773.75" width="60.5" height="67.25" fill="#2e3034"/>
<rect x="1533" y="773.75" width="60.5" height="67.25" fill="#4a7a80"/>
<rect x="1593" y="773.75" width="60.5" height="67.25" fill="#4a8a8a"/>
<rect x="1653" y="773.75" width="60.5" height="67.25" fill="#a09078"/>
<rect x="1713" y="773.75" width="60.5" height="67.25" fill="#d8d4b0"/>
<rect x="1773" y="773.75" width="60.5" height="67.25" fill="#50a0a8"/>
<rect x="1833" y="773.75" width="60.5" height="67.25" fill="#3a4848"/>
<rect x="1893" y="773.75" width="60.5" height="67.25" fill="#4a4038"/>
<rect x="993" y="840.50" width="60.5" height="67.25" fill="#c08060"/>
<rect x="1053" y="840.50" width="60.5" height="67.25" fill="#7a3a2a"/>
<rect x="1113" y="840.50" width="60.5" height="67.25" fill="#6a2a30"/>
<rect x="1173" y="840.50" width="60.5" height="67.25" fill="#4a3438"/>
<rect x="1233" y="840.50" width="60.5" height="67.25" fill="#3e444a"/>
<rect x="1293" y="840.50" width="60.5" height="67.25" fill="#3a4248"/>
<rect x="1353" y="840.50" width="60.5" height="67.25" fill="#344448"/>
<rect x="1413" y="840.50" width="60.5" height="67.25" fill="#3a5058"/>
<rect x="1473" y="840.50" width="60.5" height="67.25" fill="#34484c"/>
<rect x="1533" y="840.50" width="60.5" height="67.25" fill="#304448"/>
<rect x="1593" y="840.50" width="60.5" height="67.25" fill="#2e3a3e"/>
<rect x="1653" y="840.50" width="60.5" height="67.25" fill="#2e2e38"/>
<rect x="1713" y="840.50" width="60.5" height="67.25" fill="#3e4a54"/>
<rect x="1773" y="840.50" width="60.5" height="67.25" fill="#4aa8b0"/>
<rect x="1833" y="840.50" width="60.5" height="67.25" fill="#4a5a5a"/>
<rect x="1893" y="840.50" width="60.5" height="67.25" fill="#9a7a68"/>
<rect x="993" y="907.25" width="60.5" height="67.25" fill="#a08070"/>
<rect x="1053" y="907.25" width="60.5" height="67.25" fill="#7a7072"/>
<rect x="1113" y="907.25" width="60.5" height="67.25" fill="#5a6068"/>
<rect x="1173" y="907.25" width="60.5" height="67.25" fill="#4a5860"/>
<rect x="1233" y="907.25" width="60.5" height="67.25" fill="#4a5058"/>
<rect x="1293" y="907.25" width="60.5" height="67.25" fill="#4a7a80"/>
<rect x="1353" y="907.25" width="60.5" height="67.25" fill="#4a8c90"/>
<rect x="1413" y="907.25" width="60.5" height="67.25" fill="#4a8a90"/>
<rect x="1473" y="907.25" width="60.5" height="67.25" fill="#4a7e84"/>
<rect x="1533" y="907.25" width="60.5" height="67.25" fill="#3a5860"/>
<rect x="1593" y="907.25" width="60.5" height="67.25" fill="#34484e"/>
<rect x="1653" y="907.25" width="60.5" height="67.25" fill="#3e5058"/>
<rect x="1713" y="907.25" width="60.5" height="67.25" fill="#3e7a80"/>
<rect x="1773" y="907.25" width="60.5" height="67.25" fill="#4aa0a8"/>
<rect x="1833" y="907.25" width="60.5" height="67.25" fill="#3a4848"/>
<rect x="1893" y="907.25" width="60.5" height="67.25" fill="#7a5a48"/>
<rect x="993" y="974.00" width="60.5" height="67.25" fill="#b08070"/>
<rect x="1053" y="974.00" width="60.5" height="67.25" fill="#a8a080"/>
<rect x="1113" y="974.00" width="60.5" height="67.25" fill="#b0b07a"/>
<rect x="1173" y="974.00" width="60.5" height="67.25" fill="#a0a078"/>
<rect x="1233" y="974.00" width="60.5" height="67.25" fill="#6a7a80"/>
<rect x="1293" y="974.00" width="60.5" height="67.25" fill="#7a8280"/>
<rect x="1353" y="974.00" width="60.5" height="67.25" fill="#a08a80"/>
<rect x="1413" y="974.00" width="60.5" height="67.25" fill="#6a7a80"/>
<rect x="1473" y="974.00" width="60.5" height="67.25" fill="#506a70"/>
<rect x="1533" y="974.00" width="60.5" height="67.25" fill="#4a7a7e"/>
<rect x="1593" y="974.00" width="60.5" height="67.25" fill="#4a7e80"/>
<rect x="1653" y="974.00" width="60.5" height="67.25" fill="#3e6a70"/>
<rect x="1713" y="974.00" width="60.5" height="67.25" fill="#3e6a70"/>
<rect x="1773" y="974.00" width="60.5" height="67.25" fill="#2e4a50"/>
<rect x="1833" y="974.00" width="60.5" height="67.25" fill="#5a4a40"/>
<rect x="1893" y="974.00" width="60.5" height="67.25" fill="#5a3e34"/>
<rect x="993" y="1040.75" width="60.5" height="67.25" fill="#b05040"/>
<rect x="1053" y="1040.75" width="60.5" height="67.25" fill="#b87040"/>
<rect x="1113" y="1040.75" width="60.5" height="67.25" fill="#b87038"/>
<rect x="1173" y="1040.75" width="60.5" height="67.25" fill="#a84a30"/>
<rect x="1233" y="1040.75" width="60.5" height="67.25" fill="#a03a28"/>
<rect x="1293" y="1040.75" width="60.5" height="67.25" fill="#9a3a30"/>
<rect x="1353" y="1040.75" width="60.5" height="67.25" fill="#8a5048"/>
<rect x="1413" y="1040.75" width="60.5" height="67.25" fill="#6a5a60"/>
<rect x="1473" y="1040.75" width="60.5" height="67.25" fill="#4a5458"/>
<rect x="1533" y="1040.75" width="60.5" height="67.25" fill="#3e4a50"/>
<rect x="1593" y="1040.75" width="60.5" height="67.25" fill="#4a7880"/>
<rect x="1653" y="1040.75" width="60.5" height="67.25" fill="#4a8088"/>
<rect x="1713" y="1040.75" width="60.5" height="67.25" fill="#4a7a80"/>
<rect x="1773" y="1040.75" width="60.5" height="67.25" fill="#4a8a90"/>
<rect x="1833" y="1040.75" width="60.5" height="67.25" fill="#7a9088"/>
<rect x="1893" y="1040.75" width="60.5" height="67.25" fill="#c8a078"/>
<rect x="993" y="1107.50" width="60.5" height="67.25" fill="#904030"/>
<rect x="1053" y="1107.50" width="60.5" height="67.25" fill="#8a4838"/>
<rect x="1113" y="1107.50" width="60.5" height="67.25" fill="#8a4430"/>
<rect x="1173" y="1107.50" width="60.5" height="67.25" fill="#8a4030"/>
<rect x="1233" y="1107.50" width="60.5" height="67.25" fill="#7a3428"/>
<rect x="1293" y="1107.50" width="60.5" height="67.25" fill="#6e2c24"/>
<rect x="1353" y="1107.50" width="60.5" height="67.25" fill="#7a2a20"/>
<rect x="1413" y="1107.50" width="60.5" height="67.25" fill="#5a3836"/>
<rect x="1473" y="1107.50" width="60.5" height="67.25" fill="#3a3a3c"/>
<rect x="1533" y="1107.50" width="60.5" height="67.25" fill="#3a3a3c"/>
<rect x="1593" y="1107.50" width="60.5" height="67.25" fill="#3a3a3e"/>
<rect x="1653" y="1107.50" width="60.5" height="67.25" fill="#3e3c40"/>
<rect x="1713" y="1107.50" width="60.5" height="67.25" fill="#4a6e74"/>
<rect x="1773" y="1107.50" width="60.5" height="67.25" fill="#6a9a98"/>
<rect x="1833" y="1107.50" width="60.5" height="67.25" fill="#d0a888"/>
<rect x="1893" y="1107.50" width="60.5" height="67.25" fill="#d8a880"/>
<rect x="993" y="1174.25" width="60.5" height="67.25" fill="#806058"/>
<rect x="1053" y="1174.25" width="60.5" height="67.25" fill="#8a7068"/>
<rect x="1113" y="1174.25" width="60.5" height="67.25" fill="#7a6460"/>
<rect x="1173" y="1174.25" width="60.5" height="67.25" fill="#6a5450"/>
<rect x="1233" y="1174.25" width="60.5" height="67.25" fill="#6a4a44"/>
<rect x="1293" y="1174.25" width="60.5" height="67.25" fill="#5a4a48"/>
<rect x="1353" y="1174.25" width="60.5" height="67.25" fill="#5a4848"/>
<rect x="1413" y="1174.25" width="60.5" height="67.25" fill="#4a4446"/>
<rect x="1473" y="1174.25" width="60.5" height="67.25" fill="#3e3a3c"/>
<rect x="1533" y="1174.25" width="60.5" height="67.25" fill="#3e3a3c"/>
<rect x="1593" y="1174.25" width="60.5" height="67.25" fill="#3e3a40"/>
<rect x="1653" y="1174.25" width="60.5" height="67.25" fill="#4a4450"/>
<rect x="1713" y="1174.25" width="60.5" height="67.25" fill="#4a4450"/>
<rect x="1773" y="1174.25" width="60.5" height="67.25" fill="#4a4450"/>
<rect x="1833" y="1174.25" width="60.5" height="67.25" fill="#6a6070"/>
<rect x="1893" y="1174.25" width="60.5" height="67.25" fill="#6a5a68"/>
</g>
<rect x="1870" y="173" width="83" height="119" fill="#9db6bb"/>
<rect x="1840" y="173" width="30" height="45" fill="#8aa4ac"/>
<rect x="1772" y="218" width="70" height="422" fill="#32364a"/>
<rect x="1840" y="218" width="30" height="82" fill="#4a5a66"/>
<rect x="1853" y="173" width="100" height="11" fill="#a8c0c4"/>
<rect x="1842" y="218" width="26" height="394" fill="#62747c"/>
<rect x="993" y="771" width="19" height="101" fill="#f0e4d0"/>
<rect x="1012" y="775" width="33" height="97" fill="#e06020"/>
<rect x="1045" y="775" width="37" height="97" fill="#a84a2a"/>
<rect x="993" y="872" width="19" height="88" fill="#e0a060"/>
<rect x="1012" y="872" width="43" height="88" fill="#9a8078"/>
<rect x="993" y="975" width="19" height="266" fill="#b02818"/>
<rect x="1092" y="700" width="23" height="78" fill="#4a2420"/>
<rect x="1092" y="778" width="23" height="122" fill="#8a3a1e"/>
<rect x="1115" y="778" width="28" height="102" fill="#7a3a48"/>
<rect x="1111" y="570" width="105" height="104" fill="#42282c"/>
<rect x="1118" y="615" width="52" height="55" fill="#6a4030"/>
<rect x="1216" y="560" width="34" height="140" fill="#3a2a48"/>
<rect x="1437" y="541" width="41" height="31" fill="#7a6058"/>
<rect x="1454" y="572" width="56" height="23" fill="#8a6a58"/>
<rect x="1508" y="523" width="52" height="22" fill="#8a7058"/>
<rect x="1530" y="570" width="35" height="25" fill="#9a6a50"/>
<polygon points="1470,830 1500,815 1530,800 1560,785 1590,768 1620,752 1650,738 1700,718 1700,830" fill="#4a8086"/>
<rect x="1480" y="830" width="220" height="40" fill="#22302f"/>
<rect x="1600" y="722" width="79" height="38" fill="#4a7a80"/>
<rect x="1655" y="750" width="25" height="62" fill="#9a7050"/>
<rect x="1679" y="719" width="110" height="111" fill="#c8bc98"/>
<rect x="1690" y="740" width="78" height="82" fill="#e8e4c0"/>
<rect x="1679" y="822" width="110" height="9" fill="#c8a0b0"/>
<g stroke="#b8b090" stroke-width="2" opacity="0.6"><line x1="1715" y1="740" x2="1715" y2="822"/><line x1="1740" y1="740" x2="1740" y2="822"/><line x1="1690" y1="768" x2="1768" y2="768"/><line x1="1690" y1="795" x2="1768" y2="795"/></g>
<rect x="1760" y="820" width="70" height="80" fill="#50b0b8"/>
<rect x="1730" y="880" width="70" height="60" fill="#4aa8b0"/>
<rect x="1092" y="975" width="118" height="75" fill="#b8b880"/>
<rect x="1092" y="1050" width="125" height="19" fill="#c8903a"/>
<rect x="1012" y="975" width="70" height="104" fill="#c0a890"/>
<rect x="1055" y="880" width="156" height="20" fill="#6a1c16"/>
<rect x="1012" y="960" width="70" height="15" fill="#a83222"/>
<rect x="1092" y="960" width="118" height="15" fill="#6a3a40"/>
<rect x="1258" y="938" width="63" height="90" fill="#4a8890"/>
<rect x="1258" y="1028" width="63" height="22" fill="#6a2828"/>
<rect x="1321" y="975" width="102" height="75" fill="#a08a80"/>
<rect x="1423" y="975" width="50" height="55" fill="#7a8a90"/>
<rect x="1210" y="1050" width="111" height="19" fill="#a02a20"/>
<rect x="1321" y="1050" width="79" height="19" fill="#b06048"/>
<rect x="1400" y="1050" width="73" height="19" fill="#8a6a60"/>
<rect x="1012" y="1079" width="103" height="31" fill="#d08060"/>
<rect x="1115" y="1079" width="135" height="31" fill="#c04028"/>
<rect x="1250" y="1079" width="70" height="31" fill="#8a3020"/>
<rect x="1320" y="1079" width="80" height="31" fill="#a04030"/>
<rect x="1400" y="1079" width="40" height="31" fill="#8a5048"/>
<rect x="1012" y="1110" width="203" height="70" fill="#8a4a32"/>
<rect x="1215" y="1110" width="185" height="70" fill="#6a2418"/>
<rect x="1400" y="1110" width="40" height="70" fill="#7a2a20"/>
<rect x="1012" y="1180" width="203" height="61" fill="#7a6a66"/>
<rect x="1215" y="1180" width="185" height="61" fill="#6a5450"/>
<rect x="1400" y="1180" width="40" height="61" fill="#5a4a48"/>
<rect x="1440" y="1080" width="33" height="161" fill="#3e4246"/>
<rect x="1473" y="880" width="67" height="170" fill="#4a8488"/>
<polygon points="1560,880 1720,880 1733,980 1700,1030 1640,1000 1590,950" fill="#35454b"/>
<rect x="1733" y="880" width="107" height="110" fill="#50b4bc"/>
<rect x="1733" y="990" width="107" height="30" fill="#2a4a50"/>
<rect x="1840" y="880" width="22" height="190" fill="#2a2e32"/>
<rect x="1862" y="880" width="84" height="190" fill="#7a5a42"/>
<rect x="1885" y="926" width="33" height="51" fill="#b09070"/>
<rect x="1862" y="1000" width="84" height="70" fill="#4a3028"/>
<rect x="1946" y="880" width="7" height="190" fill="#1e1e28"/>
<rect x="1540" y="1040" width="413" height="60" fill="#4a868c"/>
<polygon points="1473,1071 1740,1137 1809,1185 1809,1241 1473,1241" fill="#3a3a3c"/>
<rect x="1810" y="1100" width="143" height="45" fill="#dcc4a0"/>
<rect x="1810" y="1145" width="143" height="45" fill="#dca070"/>
<rect x="1473" y="1190" width="267" height="51" fill="#463e44"/>
<rect x="1740" y="1190" width="100" height="51" fill="#564e5c"/>
<rect x="1840" y="1190" width="113" height="6" fill="#2a2a2a"/>
<rect x="1840" y="1196" width="113" height="19" fill="#9a8a98"/>
<rect x="1840" y="1215" width="113" height="26" fill="#3a3036"/>
<polygon points="1953,288 1925,291 1900,303 1884,330 1870,380 1866,430 1868,500 1876,560 1880,600 1860,640 1848,700 1850,760 1845,830 1870,835 1953,835" fill="#241e1e"/>
<polygon points="1953,318 1930,325 1915,345 1908,380 1905,420 1912,460 1920,500 1935,530 1953,555" fill="#dcbca4"/>
<rect x="1922" y="335" width="31" height="65" fill="#ead4c0"/>
<rect x="1906" y="405" width="42" height="7" fill="#2a2020"/>
<rect x="1916" y="438" width="37" height="12" fill="#3a2a2a"/>
<rect x="1935" y="620" width="18" height="100" fill="#dcc0a8"/>
<line x1="1890" y1="680" x2="1950" y2="652" stroke="#c8c8d0" stroke-width="6"/>
<rect x="1862" y="835" width="84" height="45" fill="#8a6a58"/>
<rect x="1875" y="845" width="55" height="25" fill="#c0a898"/>
<g fill="#f4f2f0"><rect x="1082" y="253" width="127" height="9"/><rect x="1488" y="253" width="404" height="9"/><rect x="1892" y="253" width="24" height="9" fill="#b8c4c8"/><rect x="1082" y="253" width="10" height="826"/><rect x="1082" y="1069" width="299" height="10"/><rect x="1381" y="1069" width="9" height="10" fill="#b0a8a8"/></g>
<rect x="1209" y="174" width="279" height="278" fill="#9b1a28"/>
<path d="M1266 389 L1322 252 L1381 390 L1413 390 L1413 262" fill="none" stroke="#fff" stroke-width="22" stroke-linecap="round" stroke-linejoin="round"/>
<circle cx="1413.5" cy="252.5" r="33" fill="#fff"/>
<rect x="1015.2" y="642.2" width="17.6" height="17.6" fill="#fff" opacity="0.12"/>
<rect x="1020.15" y="647.15" width="7.699999999999999" height="7.699999999999999" fill="#ece8e8" opacity="0.85"/>
<rect x="1012.0" y="695.0" width="16.0" height="16.0" fill="#fff" opacity="0.12"/>
<rect x="1016.5" y="699.5" width="7.0" height="7.0" fill="#ece8e8" opacity="0.85"/>
<rect x="1059.6" y="789.6" width="12.8" height="12.8" fill="#fff" opacity="0.12"/>
<rect x="1063.2" y="793.2" width="5.6" height="5.6" fill="#ece8e8" opacity="0.85"/>
<rect x="1145.4" y="781.4" width="19.200000000000003" height="19.200000000000003" fill="#fff" opacity="0.12"/>
<rect x="1150.8" y="786.8" width="8.399999999999999" height="8.399999999999999" fill="#ece8e8" opacity="0.85"/>
<rect x="1144.4" y="806.4" width="11.200000000000001" height="11.200000000000001" fill="#fff" opacity="0.12"/>
<rect x="1147.55" y="809.55" width="4.8999999999999995" height="4.8999999999999995" fill="#ece8e8" opacity="0.85"/>
<rect x="1168.0" y="857.0" width="16.0" height="16.0" fill="#fff" opacity="0.12"/>
<rect x="1172.5" y="861.5" width="7.0" height="7.0" fill="#ece8e8" opacity="0.85"/>
<rect x="1134.2" y="868.2" width="17.6" height="17.6" fill="#fff" opacity="0.12"/>
<rect x="1139.15" y="873.15" width="7.699999999999999" height="7.699999999999999" fill="#ece8e8" opacity="0.85"/>
<rect x="1298.8" y="599.8" width="14.4" height="14.4" fill="#fff" opacity="0.12"/>
<rect x="1302.85" y="603.85" width="6.3" height="6.3" fill="#ece8e8" opacity="0.85"/>
<rect x="1279.4" y="606.4" width="11.200000000000001" height="11.200000000000001" fill="#fff" opacity="0.12"/>
<rect x="1282.55" y="609.55" width="4.8999999999999995" height="4.8999999999999995" fill="#ece8e8" opacity="0.85"/>
<rect x="1357.4" y="704.4" width="19.200000000000003" height="19.200000000000003" fill="#fff" opacity="0.12"/>
<rect x="1362.8" y="709.8" width="8.399999999999999" height="8.399999999999999" fill="#ece8e8" opacity="0.85"/>
<rect x="1497.2" y="720.2" width="17.6" height="17.6" fill="#fff" opacity="0.12"/>
<rect x="1502.15" y="725.15" width="7.699999999999999" height="7.699999999999999" fill="#ece8e8" opacity="0.85"/>
<rect x="1567.8" y="644.8" width="14.4" height="14.4" fill="#fff" opacity="0.12"/>
<rect x="1571.85" y="648.85" width="6.3" height="6.3" fill="#ece8e8" opacity="0.85"/>
<rect x="1543.6" y="670.6" width="12.8" height="12.8" fill="#fff" opacity="0.12"/>
<rect x="1547.2" y="674.2" width="5.6" height="5.6" fill="#ece8e8" opacity="0.85"/>
<rect x="1532.4" y="677.4" width="11.200000000000001" height="11.200000000000001" fill="#fff" opacity="0.12"/>
<rect x="1535.55" y="680.55" width="4.8999999999999995" height="4.8999999999999995" fill="#ece8e8" opacity="0.85"/>
<rect x="1619.8" y="599.8" width="14.4" height="14.4" fill="#fff" opacity="0.12"/>
<rect x="1623.85" y="603.85" width="6.3" height="6.3" fill="#ece8e8" opacity="0.85"/>
<rect x="1342.4" y="819.4" width="19.200000000000003" height="19.200000000000003" fill="#fff" opacity="0.12"/>
<rect x="1347.8" y="824.8" width="8.399999999999999" height="8.399999999999999" fill="#ece8e8" opacity="0.85"/>
<rect x="1601.4" y="729.4" width="11.200000000000001" height="11.200000000000001" fill="#fff" opacity="0.12"/>
<rect x="1604.55" y="732.55" width="4.8999999999999995" height="4.8999999999999995" fill="#ece8e8" opacity="0.85"/>
<rect x="1582.6" y="766.6" width="12.8" height="12.8" fill="#fff" opacity="0.12"/>
<rect x="1586.2" y="770.2" width="5.6" height="5.6" fill="#ece8e8" opacity="0.85"/>
<rect x="1784.0" y="626.0" width="16.0" height="16.0" fill="#fff" opacity="0.12"/>
<rect x="1788.5" y="630.5" width="7.0" height="7.0" fill="#ece8e8" opacity="0.85"/>
<rect x="1638.8" y="707.8" width="14.4" height="14.4" fill="#fff" opacity="0.12"/>
<rect x="1642.85" y="711.85" width="6.3" height="6.3" fill="#ece8e8" opacity="0.85"/>
<rect x="1658.6" y="726.6" width="12.8" height="12.8" fill="#fff" opacity="0.12"/>
<rect x="1662.2" y="730.2" width="5.6" height="5.6" fill="#ece8e8" opacity="0.85"/>
<rect x="1644.6" y="746.6" width="12.8" height="12.8" fill="#fff" opacity="0.12"/>
<rect x="1648.2" y="750.2" width="5.6" height="5.6" fill="#ece8e8" opacity="0.85"/>
<rect x="1219.8" y="1002.8" width="14.4" height="14.4" fill="#fff" opacity="0.12"/>
<rect x="1223.85" y="1006.85" width="6.3" height="6.3" fill="#ece8e8" opacity="0.85"/>
<rect x="1408.0" y="892.0" width="16.0" height="16.0" fill="#fff" opacity="0.12"/>
<rect x="1412.5" y="896.5" width="7.0" height="7.0" fill="#ece8e8" opacity="0.85"/>
<rect x="1434.2" y="914.2" width="17.6" height="17.6" fill="#fff" opacity="0.12"/>
<rect x="1439.15" y="919.15" width="7.699999999999999" height="7.699999999999999" fill="#ece8e8" opacity="0.85"/>
<rect x="1369.8" y="995.8" width="14.4" height="14.4" fill="#fff" opacity="0.12"/>
<rect x="1373.85" y="999.85" width="6.3" height="6.3" fill="#ece8e8" opacity="0.85"/>
<rect x="1371.8" y="1027.8" width="14.4" height="14.4" fill="#fff" opacity="0.12"/>
<rect x="1375.85" y="1031.85" width="6.3" height="6.3" fill="#ece8e8" opacity="0.85"/>
<rect x="1417.4" y="1012.4" width="11.200000000000001" height="11.200000000000001" fill="#fff" opacity="0.12"/>
<rect x="1420.55" y="1015.55" width="4.8999999999999995" height="4.8999999999999995" fill="#ece8e8" opacity="0.85"/>
<rect x="1488.8" y="1020.8" width="14.4" height="14.4" fill="#fff" opacity="0.12"/>
<rect x="1492.85" y="1024.85" width="6.3" height="6.3" fill="#ece8e8" opacity="0.85"/>
<rect x="1485.4" y="1008.4" width="11.200000000000001" height="11.200000000000001" fill="#fff" opacity="0.12"/>
<rect x="1488.55" y="1011.55" width="4.8999999999999995" height="4.8999999999999995" fill="#ece8e8" opacity="0.85"/>
<rect x="1063.8" y="1103.8" width="14.4" height="14.4" fill="#fff" opacity="0.12"/>
<rect x="1067.85" y="1107.85" width="6.3" height="6.3" fill="#ece8e8" opacity="0.85"/>
<rect x="1785.8" y="1075.8" width="14.4" height="14.4" fill="#fff" opacity="0.12"/>
<rect x="1789.85" y="1079.85" width="6.3" height="6.3" fill="#ece8e8" opacity="0.85"/>
<rect x="1809.0" y="1089.0" width="16.0" height="16.0" fill="#fff" opacity="0.12"/>
<rect x="1813.5" y="1093.5" width="7.0" height="7.0" fill="#ece8e8" opacity="0.85"/>
<rect x="1857.6" y="1074.6" width="12.8" height="12.8" fill="#fff" opacity="0.12"/>
<rect x="1861.2" y="1078.2" width="5.6" height="5.6" fill="#ece8e8" opacity="0.85"/>
<rect x="1844.6" y="1149.6" width="12.8" height="12.8" fill="#fff" opacity="0.12"/>
<rect x="1848.2" y="1153.2" width="5.6" height="5.6" fill="#ece8e8" opacity="0.85"/>
</svg>
<div class="card" style="left:22px;top:1327px;width:1930px;height:20px"></div>
<!-- footer -->
<div style="position:absolute;left:0;top:1337px;width:2000px;height:82px;background:#fff;border-top:1px solid #d6d6d6;box-shadow:0 -2px 4px rgba(0,0,0,0.06)"></div>
<!-- footer icons -->
<svg width="22" height="18" viewBox="0 0 22 18" style="position:absolute;left:556px;top:1369px">
<path d="M5 16 Q0.5 16 0.8 11.5 Q1.2 8 4.5 7.6 Q6 2 11 2 Q16 2 17 7 Q21.5 7.5 21.3 12 Q21 16 17 16 Z" fill="#404040"/>
<path d="M11 6.5 L7.5 10 H9.8 V13.5 H12.2 V10 H14.5 Z" fill="#fff"/>
</svg>
<svg width="18" height="22" viewBox="0 0 18 22" style="position:absolute;left:706px;top:1368px">
<path d="M2 1.5 H11 L16 6.5 V20.5 H2 Z" fill="none" stroke="#404040" stroke-width="2" stroke-linejoin="round"/>
<path d="M11 1.5 V6.5 H16" fill="none" stroke="#404040" stroke-width="1.8"/>
<rect x="5" y="11" width="8" height="1.8" fill="#404040"/><rect x="5" y="14.5" width="8" height="1.8" fill="#404040"/>
</svg>
<svg width="22" height="22" viewBox="0 0 22 22" style="position:absolute;left:867px;top:1368px">
<path d="M8.5 1 H13.5 V9 H17.5 L11 15.5 L4.5 9 H8.5 Z" fill="#404040"/>
<path d="M1 14 H7 L11 18 L15 14 H21 V20.5 H1 Z" fill="#404040"/>
</svg>
<svg width="22" height="22" viewBox="0 0 22 22" style="position:absolute;left:1071px;top:1368px">
<path d="M2 2 H16 L20 6 V20 H2 Z" fill="#404040" stroke="#404040" stroke-width="1.5" stroke-linejoin="round"/>
<rect x="5" y="4.5" width="9" height="5" fill="#fff"/>
<circle cx="11" cy="14.5" r="2.6" fill="#fff"/>
</svg>
<svg width="22" height="22" viewBox="0 0 22 22" style="position:absolute;left:1277px;top:1368px">
<path d="M8.5 1 H13.5 V9 H17.5 L11 15.5 L4.5 9 H8.5 Z" fill="#404040"/>
<path d="M1 14 H7 L11 18 L15 14 H21 V20.5 H1 Z" fill="#404040"/>
</svg>
<div class="t" style="left:105.7px;top:26.69px;font-size:40.17px;letter-spacing:-0.663px;font-weight:400;color:#151515">Procyon</div>
<div class="t" style="left:295px;top:34.93px;font-size:29.61px;letter-spacing:-0.714px;font-weight:700;color:#434343">My suite</div>
<div class="t" style="left:455.8px;top:35.61px;font-size:28.81px;letter-spacing:-1.135px;font-weight:700;color:#434343">Results</div>
<div class="t" style="left:66.2px;top:122.89px;font-size:20.69px;letter-spacing:-0.94px;font-weight:400;color:#7c2e40">Back</div>
<div class="t" style="left:34.4px;top:185.08px;font-size:23.3px;letter-spacing:-0.353px;font-weight:400;color:#151515">AI Image Generation Benchmark - Stable</div>
<div class="t" style="left:33.4px;top:208.48px;font-size:23.3px;letter-spacing:0.011px;font-weight:400;color:#151515">Diffusion 1.5 (INT8)</div>
<div class="t" style="left:45.4px;top:257.08px;font-size:23.3px;letter-spacing:-0.315px;font-weight:400;color:#454545">Overall score</div>
<div class="t" style="left:175.3px;top:350.75px;font-size:59.6px;letter-spacing:-1.618px;font-weight:700;color:#111111">26 863</div>
<div class="t" style="left:83.8px;top:414.15px;font-size:22.38px;letter-spacing:0.505px;font-weight:400;color:#555555">0% higher than the previous result</div>
<div class="t" style="left:33.4px;top:530.42px;font-size:23.6px;letter-spacing:0.078px;font-weight:400;color:#151515">Overall duration</div>
<div class="t" style="left:282.8px;top:530.41px;font-size:22.2px;letter-spacing:-0.081px;font-weight:700;color:#3a3a3a">9.306 s</div>
<div class="t" style="left:33.4px;top:645.62px;font-size:23.6px;letter-spacing:-0.336px;font-weight:400;color:#151515">Overall image</div>
<div class="t" style="left:34.4px;top:680.42px;font-size:23.6px;letter-spacing:-0.322px;font-weight:400;color:#151515">generation speed</div>
<div class="t" style="left:281.8px;top:662.91px;font-size:22.2px;letter-spacing:0.685px;font-weight:700;color:#3a3a3a">1.163 s/image</div>
<div class="t" style="left:34.4px;top:796.52px;font-size:23.6px;letter-spacing:-0.602px;font-weight:400;color:#151515">Average UNET</div>
<div class="t" style="left:33.4px;top:830.82px;font-size:23.6px;letter-spacing:-1.051px;font-weight:400;color:#151515">Speed</div>
<div class="t" style="left:282px;top:812.81px;font-size:22.2px;letter-spacing:0.786px;font-weight:700;color:#3a3a3a">44.638 it/s</div>
<div class="t" style="left:57.2px;top:941.55px;font-size:21.2px;letter-spacing:-0.364px;font-weight:700;color:#3d3d3d">Text Encoder</div>
<div class="t" style="left:56.2px;top:975.65px;font-size:21.2px;letter-spacing:-0.22px;font-weight:700;color:#3d3d3d">Device:</div>
<div class="t" style="left:56.2px;top:1062.95px;font-size:21.2px;letter-spacing:-0.444px;font-weight:700;color:#3d3d3d">UNET Device:</div>
<div class="t" style="left:57.2px;top:1166.85px;font-size:21.2px;letter-spacing:-0.77px;font-weight:700;color:#3d3d3d">VAE Device:</div>
<div class="t" style="left:238.6px;top:935.35px;font-size:21.2px;letter-spacing:-0.399px;font-weight:700;color:#3d3d3d">NVIDIA GeForce RTX</div>
<div class="t" style="left:239.6px;top:969.65px;font-size:21.2px;letter-spacing:-0.597px;font-weight:700;color:#3d3d3d">5060 Ti 15.9 GB</div>
<div class="t" style="left:238.6px;top:1040.05px;font-size:21.2px;letter-spacing:-0.399px;font-weight:700;color:#3d3d3d">NVIDIA GeForce RTX</div>
<div class="t" style="left:239.6px;top:1074.45px;font-size:21.2px;letter-spacing:-0.597px;font-weight:700;color:#3d3d3d">5060 Ti 15.9 GB</div>
<div class="t" style="left:238.6px;top:1144.05px;font-size:21.2px;letter-spacing:-0.399px;font-weight:700;color:#3d3d3d">NVIDIA GeForce RTX</div>
<div class="t" style="left:239.6px;top:1178.35px;font-size:21.2px;letter-spacing:-0.597px;font-weight:700;color:#3d3d3d">5060 Ti 15.9 GB</div>
<div class="t" style="left:530.4px;top:199.62px;font-size:23.6px;letter-spacing:-0.436px;font-weight:400;color:#151515">Settings</div>
<div class="t" style="left:542.4px;top:277.25px;font-size:21.2px;letter-spacing:-0.48px;font-weight:700;color:#3d3d3d">Batch size:</div>
<div class="t" style="left:542.4px;top:357.65px;font-size:21.2px;letter-spacing:0.385px;font-weight:700;color:#3d3d3d">Inference</div>
<div class="t" style="left:543.4px;top:391.25px;font-size:21.2px;letter-spacing:-0.75px;font-weight:700;color:#3d3d3d">steps:</div>
<div class="t" style="left:542.4px;top:462.45px;font-size:21.2px;letter-spacing:0.346px;font-weight:700;color:#3d3d3d">Model</div>
<div class="t" style="left:542.4px;top:496.55px;font-size:21.2px;letter-spacing:-0.222px;font-weight:700;color:#3d3d3d">precision:</div>
<div class="t" style="left:542.4px;top:565.65px;font-size:21.2px;letter-spacing:0.202px;font-weight:700;color:#3d3d3d">Number of</div>
<div class="t" style="left:542.4px;top:600.45px;font-size:21.2px;letter-spacing:-0.286px;font-weight:700;color:#3d3d3d">images:</div>
<div class="t" style="left:542.4px;top:670.05px;font-size:21.2px;letter-spacing:-0.217px;font-weight:700;color:#3d3d3d">Resolution:</div>
<div class="t" style="left:543.4px;top:750.85px;font-size:21.2px;letter-spacing:-0.449px;font-weight:700;color:#3d3d3d">Scheduler:</div>
<div class="t" style="left:543.4px;top:831.25px;font-size:21.2px;letter-spacing:0.191px;font-weight:700;color:#3d3d3d">AI Inference</div>
<div class="t" style="left:542.4px;top:865.35px;font-size:21.2px;letter-spacing:-0.605px;font-weight:700;color:#3d3d3d">Engine:</div>
<div class="t" style="left:542.4px;top:935.65px;font-size:21.2px;letter-spacing:0.19px;font-weight:700;color:#3d3d3d">Model ID:</div>
<div class="t" style="left:543.4px;top:1051.25px;font-size:21.2px;letter-spacing:-0.128px;font-weight:700;color:#3d3d3d">Workload</div>
<div class="t" style="left:543.4px;top:1084.85px;font-size:21.2px;letter-spacing:-0.41px;font-weight:700;color:#3d3d3d">version:</div>
<div class="t" style="left:720px;top:277.25px;font-size:21.2px;letter-spacing:0px;font-weight:700;color:#3d3d3d">1</div>
<div class="t" style="left:721px;top:357.65px;font-size:21.2px;letter-spacing:-1.183px;font-weight:700;color:#3d3d3d">50</div>
<div class="t" style="left:720px;top:462.45px;font-size:21.2px;letter-spacing:0.505px;font-weight:700;color:#3d3d3d">int8</div>
<div class="t" style="left:721px;top:565.65px;font-size:21.2px;letter-spacing:0px;font-weight:700;color:#3d3d3d">8</div>
<div class="t" style="left:721px;top:670.05px;font-size:21.2px;letter-spacing:-0.483px;font-weight:700;color:#3d3d3d">512</div>
<div class="t" style="left:720px;top:750.85px;font-size:21.2px;letter-spacing:-0.028px;font-weight:700;color:#3d3d3d">DDIMScheduler</div>
<div class="t" style="left:721px;top:831.25px;font-size:21.2px;letter-spacing:-0.586px;font-weight:700;color:#3d3d3d">TensorRT 10.12.0.36</div>
<div class="t" style="left:720px;top:935.65px;font-size:21.2px;letter-spacing:0.307px;font-weight:700;color:#3d3d3d">nmkd/stable-</div>
<div class="t" style="left:721px;top:969.25px;font-size:21.2px;letter-spacing:-0.105px;font-weight:700;color:#3d3d3d">diffusion-1.5-fp16</div>
<div class="t" style="left:720px;top:1051.25px;font-size:21.2px;letter-spacing:-0.251px;font-weight:700;color:#3d3d3d">1.1.214</div>
<div class="t" style="left:22.8px;top:1279.02px;font-size:24.07px;letter-spacing:-0.772px;font-weight:400;color:#333333">Detailed scores</div>
<div class="t" style="left:590.3px;top:1368.52px;font-size:21.0px;letter-spacing:-0.166px;font-weight:400;color:#505050">Publish</div>
<div class="t" style="left:737.5px;top:1368.52px;font-size:21.0px;letter-spacing:-0.273px;font-weight:400;color:#505050">Show log</div>
<div class="t" style="left:900px;top:1368.52px;font-size:21.0px;letter-spacing:-0.3px;font-weight:400;color:#505050">Export as File</div>
<div class="t" style="left:1103.3px;top:1368.52px;font-size:21.0px;letter-spacing:-0.634px;font-weight:400;color:#505050">Export as PDF</div>
<div class="t" style="left:1311px;top:1368.52px;font-size:21.0px;letter-spacing:-0.537px;font-weight:400;color:#505050">Export as XML</div>
</body></html>
